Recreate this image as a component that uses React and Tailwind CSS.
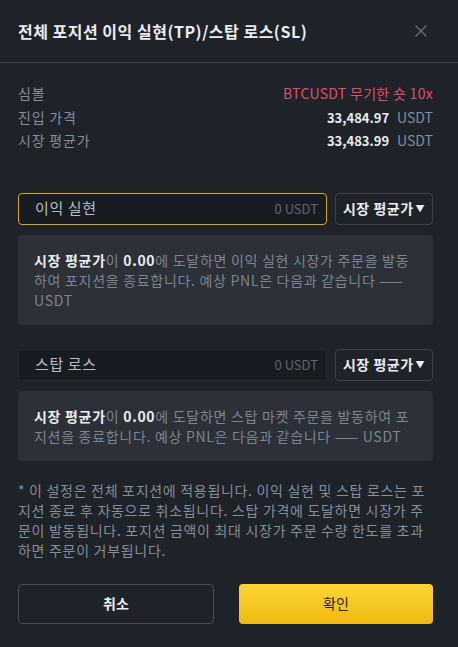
import React from 'react';
import { X } from 'lucide-react';

const font = { fontFamily: '"Noto Sans CJK KR", "Noto Sans", sans-serif' };

function InfoRow({ label, children }) {
  return (
    <div className="flex items-center justify-between h-[23.5px] text-[14px]">
      <span className="tracking-[0.8px] text-[#848e9c]">{label}</span>
      <span>{children}</span>
    </div>
  );
}

function PriceField({ label, active }) {
  return (
    <div className="flex gap-2 h-8">
      <div
        className={`flex-1 flex items-center justify-between rounded px-4 bg-[#181b21] border ${
          active ? 'border-[#d9a80f]' : 'border-[#262a31]'
        }`}
      >
        <span className="text-[15px] tracking-[0.6px] text-[#b7bdc6]">{label}</span>
        <span className="-mr-2 text-[13px] text-[#5e6673]">0 USDT</span>
      </div>
      <button className="w-[98px] flex items-center justify-center rounded border border-[#3c414a] text-[14px] tracking-[0.5px] font-bold text-[#eaecef]">
        시장 평균가<span className="text-[9px] ml-0.5">▼</span>
      </button>
    </div>
  );
}

function Hint({ children }) {
  return (
    <div className="mt-2.5 rounded bg-[#2b3039] px-4 py-[15px] text-[14px] leading-[20px] tracking-[0.7px] break-all text-[#7d8590]">
      {children}
    </div>
  );
}

export default function App() {
  return (
    <div style={font} className="w-[458px] h-[647px] bg-[#1e2229] text-[#eaecef] overflow-hidden">
      <div className="flex items-center justify-between h-[63px] pl-[18px] pr-[27px] border-b border-[#3d424a]">
        <h1 className="text-[16px] tracking-[0.5px] font-bold text-[#eaecef]">전체 포지션 이익 실현(TP)/스탑 로스(SL)</h1>
        <X size={20} className="text-[#6b7280]" strokeWidth={1.5} />
      </div>

      <div className="pl-[18px] pr-[25px]">
        <div className="pt-[19px]">
          <InfoRow label="심볼">
            <span className="tracking-[0.3px] text-[#e04e67]">BTCUSDT 무기한 숏 10x</span>
          </InfoRow>
          <InfoRow label="진입 가격">
            <span className="text-[13px] font-bold text-[#eaecef]">33,484.97</span>
            <span className="ml-2 text-[#848e9c]">USDT</span>
          </InfoRow>
          <InfoRow label="시장 평균가">
            <span className="text-[13px] font-bold text-[#eaecef]">33,483.99</span>
            <span className="ml-2 text-[#848e9c]">USDT</span>
          </InfoRow>
        </div>

        <div className="mt-[40px]">
          <PriceField label="이익 실현" active />
          <Hint>
            <b className="text-[#eaecef]">시장 평균가</b>이 <b className="text-[#eaecef]">0.00</b>에 도달하면 이익 실현 시장가 주문을 발동하여 포지션을 종료합니다. 예상 PNL은 다음과 같습니다 —— USDT
          </Hint>
        </div>

        <div className="mt-[24px]">
          <PriceField label="스탑 로스" />
          <Hint>
            <b className="text-[#eaecef]">시장 평균가</b>이 <b className="text-[#eaecef]">0.00</b>에 도달하면 스탑 마켓 주문을 발동하여 포지션을 종료합니다. 예상 PNL은 다음과 같습니다 —— USDT
          </Hint>
        </div>

        <p className="mt-[19px] text-[14px] leading-[20px] tracking-[0.7px] break-all text-[#848e9c]">
          * 이 설정은 전체 포지션에 적용됩니다. 이익 실현 및 스탑 로스는 포지션 종료 후 자동으로 취소됩니다. 스탑 가격에 도달하면 시장가 주문이 발동됩니다. 포지션 금액이 최대 시장가 주문 수량 한도를 초과하면 주문이 거부됩니다.
        </p>

        <div className="mt-[24px] flex gap-[25px]">
          <button className="flex-1 h-10 rounded border border-[#474d57] text-[14px] font-bold text-[#eaecef]">
            취소
          </button>
          <button className="flex-1 h-10 rounded bg-gradient-to-b from-[#fcd535] to-[#f0b90b] text-[14px] text-[#1e2329]">
            확인
          </button>
        </div>
      </div>
    </div>
  );
}
